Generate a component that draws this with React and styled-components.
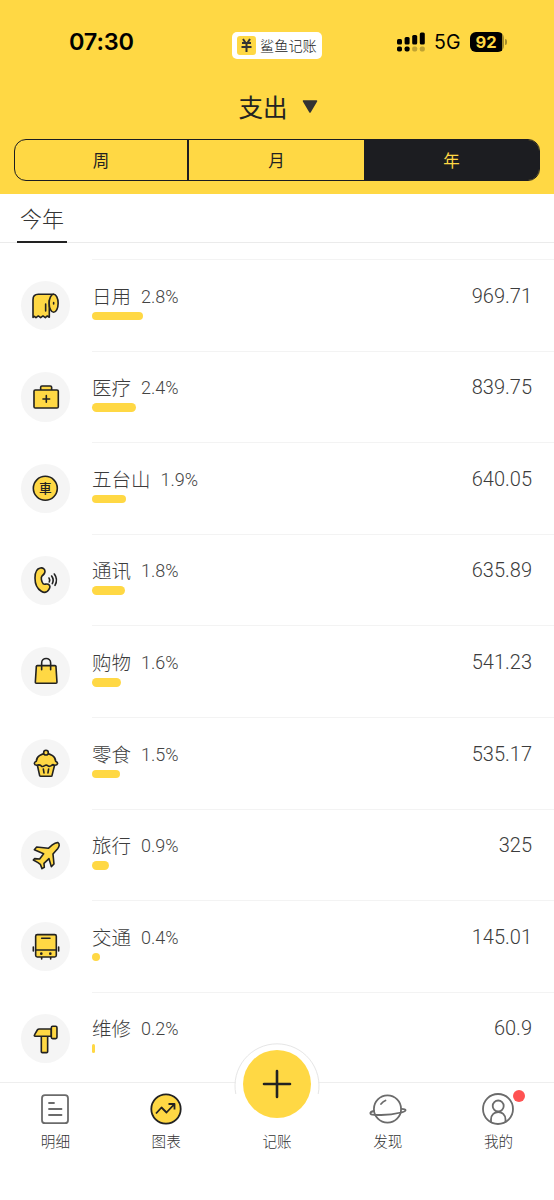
import React from 'react';
import styled, { createGlobalStyle } from 'styled-components';

const GlobalStyle = createGlobalStyle`
  * {
    box-sizing: border-box;
  }

  body {
    margin: 0;
    background: #fff;
    font-family: 'Liberation Sans', 'Noto Sans CJK SC', sans-serif;
  }
`;

const Screen = styled.div`
  display: flex;
  flex-direction: column;
  width: 554px;
  height: 1200px;
  overflow: hidden;
  background: #fff;
  color: #3c3c3c;
`;

const Header = styled.header`
  flex: none;
  height: 194px;
  padding: 0 14px;
  background: #ffd844;
`;

const StatusBar = styled.div`
  display: grid;
  grid-template-columns: 1fr auto 1fr;
  align-items: center;
  height: 84px;
`;

const Clock = styled.div`
  padding-left: 55px;
  font: 600 23.5px/30px Inter, sans-serif;
  letter-spacing: -0.2px;
  color: #000;
`;

const Brand = styled.div`
  display: flex;
  align-items: center;
  gap: 4px;
  width: 90px;
  height: 27px;
  margin-top: 7px;
  padding-left: 5px;
  border-radius: 5px;
  background: #fff;
  font: 300 14.2px/25px 'Noto Sans CJK SC', sans-serif;
  color: #222;
  white-space: nowrap;
`;

const Indicators = styled.div`
  display: flex;
  align-items: center;
  justify-content: flex-end;
  padding-right: 33.5px;
  color: #000;
`;

const Network = styled.span`
  margin: 0 9px 0 9px;
  font: 400 19.5px/24px Inter, sans-serif;
`;

const Battery = styled.div`
  width: 34px;
  height: 20px;
  padding-right: 1px;
  border-radius: 6px;
  background: linear-gradient(90deg, #000 95%, #a58c2c 95%);
  color: #ffd844;
  font: 700 16.5px/20px Inter, sans-serif;
  text-align: center;
`;

const BatteryTip = styled.i`
  width: 2px;
  height: 6px;
  margin-left: 1px;
  border-radius: 0 2px 2px 0;
  background: #a58c2c;
`;

const Title = styled.div`
  display: flex;
  align-items: center;
  justify-content: center;
  gap: 14px;
  height: 46px;
  padding-left: 2px;
  font: 400 24.5px/44px 'Noto Sans CJK SC', sans-serif;
  color: #222;
`;

const Segments = styled.div`
  display: grid;
  grid-template-columns: 172px 177px 1fr;
  height: 42px;
  margin-top: 9px;
  border: 1.5px solid #1c1d21;
  border-radius: 12px;
  overflow: hidden;
`;

const Segment = styled.div`
  border-left: ${(p) => (p.$divided ? '2px solid #1c1d21' : 'none')};
  background: ${(p) => (p.$active ? '#1c1d21' : 'transparent')};
  color: ${(p) => (p.$active ? '#ffd844' : '#222')};
  font: 400 16.5px/40px 'Noto Sans CJK SC', sans-serif;
  text-align: center;
`;

const Periods = styled.div`
  flex: none;
  height: 49px;
  padding-left: 17px;
  border-bottom: 1px solid #ebebeb;
`;

const Period = styled.div`
  width: 50px;
  height: 49px;
  border-bottom: 2px solid #222;
  font: 300 22px/47px 'Noto Sans CJK SC', sans-serif;
  color: #333;
  text-align: center;
`;

const List = styled.main`
  flex: 1;
  min-height: 0;
  padding-top: 16px;
  overflow: hidden;
`;

const Row = styled.div`
  display: flex;
  height: 91.6px;
`;

const IconCell = styled.div`
  flex: none;
  width: 92px;
  padding: 21.8px 0 0 21px;
`;

const IconDisc = styled.div`
  width: 49.3px;
  height: 49.3px;
  border-radius: 50%;
  background: #f5f5f5;

  svg {
    display: block;
    width: 100%;
    height: 100%;
  }
`;

const RowBody = styled.div`
  display: flex;
  flex: 1;
  justify-content: space-between;
  padding: 21.7px 22px 0 0;
  border-top: 1px solid #f3f3f3;
`;

const Label = styled.div`
  display: flex;
  align-items: center;
  gap: 10px;
  height: 28px;
`;

const Name = styled.span`
  font: 300 19.5px/28px 'Noto Sans CJK SC', sans-serif;
`;

const Percent = styled.span`
  padding-top: 2px;
  font: 300 18px/26px Roboto, 'Liberation Sans', sans-serif;
  color: #444;
`;

const Bar = styled.div`
  height: 8.5px;
  margin-top: 2px;
  border-radius: 5px;
  background: #ffd844;
`;

const Amount = styled.div`
  font: 300 20px/28px Roboto, 'Liberation Sans', sans-serif;
  color: #3c3c3c;
`;

const Nav = styled.nav`
  flex: none;
  display: grid;
  grid-template-columns: repeat(5, 1fr);
  height: 118px;
  border-top: 1px solid #eee;
  background: #fff;
`;

const NavItem = styled.div`
  position: relative;
  display: flex;
  flex-direction: column;
  align-items: center;
  padding-top: 8px;
  font: 300 14.6px/20px 'Noto Sans CJK SC', sans-serif;
  color: #333;
`;

const NavGlyph = styled.svg`
  width: 38px;
  height: 36px;
  margin-bottom: 4px;
  overflow: visible;
`;

const AddLabel = styled.span`
  margin-top: 40px;
`;

const AddButton = styled.div`
  position: absolute;
  top: -42px;
  left: 50%;
  width: 86px;
  height: 86px;
  transform: translateX(-50%);
`;

const Dot = styled.i`
  position: absolute;
  top: 7px;
  right: 29.5px;
  width: 12px;
  height: 12px;
  border-radius: 50%;
  background: #ff5252;
`;

const icons = {
  paper: (
    <>
      <path d="M36 109V56Q36 40 52 40H98L85 60V109L79 105L73 110L66 105L59 110L52 105L45 110L40 106Z" />
      <ellipse cx="98" cy="67" rx="13.5" ry="27" />
      <path d="M74 69V90M98 65V69" />
    </>
  ),
  medical: (
    <>
      <path d="M59 54V46Q59 42 63 42H88Q92 42 92 46V54" />
      <rect x="39" y="54" width="73" height="54" rx="4" />
      <path d="M76 71V91M66 81H86" />
    </>
  ),
  car: (
    <>
      <circle cx="73" cy="73" r="36" />
      <text
        x="73"
        y="87"
        fill="#222"
        stroke="none"
        fontFamily="Noto Sans CJK SC"
        fontSize="38"
        fontWeight="500"
        textAnchor="middle"
      >
        車
      </text>
    </>
  ),
  phone: (
    <>
      <path d="M58 36C66 34 72 39 72 46C72 54 68 57 63 60C59 65 61 77 67 84C71 87 76 82 82 85C88 88 88 94 84 100C79 108 71 112 61 106C48 98 42 84 42 66C42 49 47 38 58 36Z" />
      <path fill="none" d="M84 66Q88 72 85 78M92 60Q100 71 94 83M100 54Q112 70 102 88" />
    </>
  ),
  bag: (
    <>
      <path d="M49 56H102Q105 56 105 59L108 106Q108 109 105 109H46Q43 109 43 106L46 59Q46 56 49 56Z" />
      <path fill="none" d="M62 68V48C62 30 89 30 89 48V68" />
    </>
  ),
  cake: (
    <>
      <path d="M49 78L56 110Q57 112 59 112H90Q93 112 93 110L101 78Z" />
      <path d="M47 79C38 77 38 70 46 67C46 52 61 44 75 44C89 44 104 52 104 67C113 71 111 79 101 79C97 76 94 76 91 80Q85 84 80 80Q76 76 71 80Q64 85 60 80Q55 75 47 79Z" />
      <circle cx="75" cy="41" r="7" />
      <path d="M67 90L69 102M83 90L81 102" />
    </>
  ),
  plane: (
    <path d="M111 38C105 37 99 41 94 45L82 55L47 51L40 59L68 71L56 87L41 86L37 90L51 98L58 103L63 116L70 112L69 100L84 86L91 110L99 102L96 72L110 56C115 50 117 42 111 38Z" />
  ),
  bus: (
    <>
      <path d="M62 105V111M89 105V111M37 75V87M113 75V87" />
      <rect x="44" y="38" width="62" height="67" rx="5" />
      <path d="M44 84H106M62 49H87" />
      <path d="M61 95V95.1M88 95V95.1" strokeWidth="8" />
    </>
  ),
  hammer: (
    <>
      <rect x="61" y="66" width="19" height="50" rx="3" />
      <path d="M41 62L49 48Q51 45 55 45H91V67H43Q38 66 41 62Z" />
      <rect x="91" y="37" width="17" height="37" rx="4" />
    </>
  ),
};

const rows = [
  { icon: 'paper', name: '日用', percent: '2.8%', amount: '969.71', bar: 51 },
  { icon: 'medical', name: '医疗', percent: '2.4%', amount: '839.75', bar: 44 },
  { icon: 'car', name: '五台山', percent: '1.9%', amount: '640.05', bar: 33.5 },
  { icon: 'phone', name: '通讯', percent: '1.8%', amount: '635.89', bar: 33 },
  { icon: 'bag', name: '购物', percent: '1.6%', amount: '541.23', bar: 28.5 },
  { icon: 'cake', name: '零食', percent: '1.5%', amount: '535.17', bar: 28 },
  { icon: 'plane', name: '旅行', percent: '0.9%', amount: '325', bar: 17 },
  { icon: 'bus', name: '交通', percent: '0.4%', amount: '145.01', bar: 7.5 },
  { icon: 'hammer', name: '维修', percent: '0.2%', amount: '60.9', bar: 3 },
];

const CategoryIcon = ({ name }) => (
  <IconDisc>
    <svg
      viewBox="0 0 148 148"
      fill="#ffd844"
      stroke="#222"
      strokeWidth="4.8"
      strokeLinecap="round"
      strokeLinejoin="round"
    >
      {icons[name]}
    </svg>
  </IconDisc>
);

const NavIcon = ({ children }) => (
  <NavGlyph
    viewBox="0 0 38 36"
    fill="none"
    stroke="#6b6b6b"
    strokeWidth="1.8"
    strokeLinecap="round"
    strokeLinejoin="round"
  >
    {children}
  </NavGlyph>
);

const App = () => {
  return (
    <Screen>
      <GlobalStyle />
      <Header>
        <StatusBar>
          <Clock>07:30</Clock>
          <Brand>
            <svg width="19" height="19" viewBox="0 0 19 19">
              <rect width="19" height="19" rx="3" fill="#ffd844" />
              <path
                d="M6 3L8.3 6.5M13 3L10.7 6.5M5 7H14M4.5 11H14.5M9.5 7V16"
                fill="none"
                stroke="#333"
                strokeWidth="2"
              />
            </svg>
            鲨鱼记账
          </Brand>
          <Indicators>
            <svg width="28" height="20" viewBox="0 0 28 20">
              <rect x="0" y="7" width="5" height="5.5" rx="1.5" />
              <rect x="7.6" y="5" width="5" height="7.5" rx="1.5" />
              <rect x="15.2" y="3" width="5" height="9.5" rx="1.5" />
              <rect x="22.8" y="0.5" width="5" height="12" rx="1.5" />
              <rect x="0" y="14.5" width="5" height="5" rx="1.8" />
              <rect x="7.6" y="14.5" width="5" height="5" rx="1.8" />
              <rect x="15.2" y="14.5" width="5" height="5" rx="1.8" opacity="0.25" />
              <rect x="22.8" y="14.5" width="5" height="5" rx="1.8" opacity="0.25" />
            </svg>
            <Network>5G</Network>
            <Battery>92</Battery>
            <BatteryTip />
          </Indicators>
        </StatusBar>
        <Title>
          支出
          <svg width="16" height="14" viewBox="0 0 16 14">
            <path d="M1.5 1H14.5L8 12Z" fill="#333" stroke="#333" strokeWidth="1.5" strokeLinejoin="round" />
          </svg>
        </Title>
        <Segments>
          <Segment>周</Segment>
          <Segment $divided>月</Segment>
          <Segment $active>年</Segment>
        </Segments>
      </Header>
      <Periods>
        <Period>今年</Period>
      </Periods>
      <List>
        {rows.map((row) => (
          <Row key={row.icon}>
            <IconCell>
              <CategoryIcon name={row.icon} />
            </IconCell>
            <RowBody>
              <div>
                <Label>
                  <Name>{row.name}</Name>
                  <Percent>{row.percent}</Percent>
                </Label>
                <Bar style={{ width: row.bar }} />
              </div>
              <Amount>{row.amount}</Amount>
            </RowBody>
          </Row>
        ))}
      </List>
      <Nav>
        <NavItem>
          <NavIcon>
            <rect x="6" y="4.2" width="26" height="28" rx="3" />
            <path d="M13 12H18M13 18H25.5M13 24H25.5" />
          </NavIcon>
          明细
        </NavItem>
        <NavItem>
          <NavIcon>
            <circle cx="19" cy="18" r="14.7" fill="#ffd844" stroke="#222" />
            <path d="M9 22.5L14.5 16.5L19.5 21.5L27 13.5M21.5 13H27.5V18.5" stroke="#222" strokeLinecap="butt" />
          </NavIcon>
          图表
        </NavItem>
        <NavItem>
          <AddButton>
            <svg width="86" height="86" viewBox="0 0 86 86">
              <circle cx="43" cy="43" r="41.5" fill="#fff" />
              <path d="M1.8 53A42 42 0 1 1 84.2 53" fill="none" stroke="#e6e6e6" />
              <circle cx="43" cy="43" r="34" fill="#ffd844" />
              <path d="M43 30V56M30 43H56" stroke="#222" strokeWidth="2.6" strokeLinecap="round" />
            </svg>
          </AddButton>
          <AddLabel>记账</AddLabel>
        </NavItem>
        <NavItem>
          <NavIcon>
            <circle cx="18.5" cy="18" r="13.6" />
            <path d="M5 20C0 21 0 24 6 23.8C12 24.2 24 23.6 32 21.5C38 20.3 38 18 32.6 17.8" />
            <path d="M12 13Q14 10.5 16.5 9.5" />
          </NavIcon>
          发现
        </NavItem>
        <NavItem>
          <NavIcon>
            <circle cx="18" cy="18" r="15" />
            <circle cx="18.2" cy="15" r="5.5" />
            <path d="M11 31V28.5C11 18.5 25.5 18.5 25.5 28.5V31" />
          </NavIcon>
          我的
          <Dot />
        </NavItem>
      </Nav>
    </Screen>
  );
};

export default App;
